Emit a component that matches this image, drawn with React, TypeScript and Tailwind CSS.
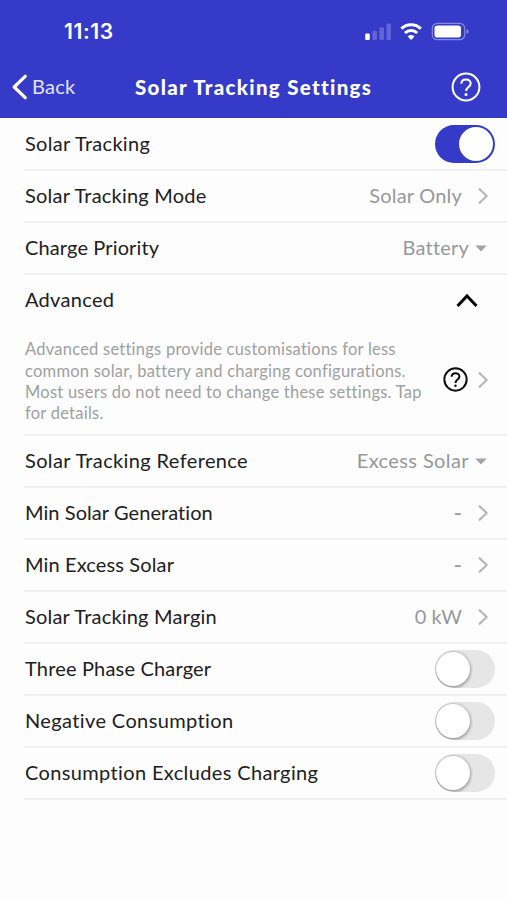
import React from "react";

function Help({ size, stroke, className }: { size: number; stroke: number; className?: string }) {
  return (
    <svg width={size} height={size} viewBox="0 0 30 30" fill="none" stroke="currentColor" strokeWidth={stroke} className={className}>
      <circle cx="15" cy="15" r="13.4" />
      <path d="M10.3 11.8c.1-2.7 2.1-4.4 4.7-4.4s4.7 1.7 4.7 4.1c0 3.6-4.6 3.6-4.6 7.6" />
      <circle cx="15" cy="22.4" r="1.5" fill="currentColor" stroke="none" />
    </svg>
  );
}

function Chevron() {
  return (
    <svg width="10" height="16" viewBox="0 0 10 16" fill="none" stroke="#b4b5b7" strokeWidth="2.1" strokeLinecap="round" strokeLinejoin="round" className="mr-[19px] ml-4 shrink-0">
      <path d="M1.6 1.2 8.7 8 1.6 14.8" />
    </svg>
  );
}

function Caret() {
  return (
    <svg width="12" height="7" viewBox="0 0 12 7" className="mr-5 ml-1.5 shrink-0">
      <path d="M.3.5h11.4L6 6.5z" fill="#a2a4a7" />
    </svg>
  );
}

function Toggle({ on = false }: { on?: boolean }) {
  return (
    <div className={`mr-3 flex h-[38px] w-[60px] items-center overflow-hidden rounded-full ${on ? "justify-end bg-[#363ac8] pr-[2px]" : "bg-[#e6e6e6] pl-px"}`}>
      <div className={`size-[34px] rounded-full bg-white ${on ? "" : "shadow-[0_1px_3px_1px_rgba(0,0,0,0.32)]"}`} />
    </div>
  );
}

function Row({ label, className, children }: { label: string; className: string; children: React.ReactNode }) {
  return (
    <div className="ml-6 flex h-13 items-center border-b-2 border-[#f0f0f1] pl-px text-xl">
      <span className={`pb-0.5 whitespace-nowrap text-[#202022] ${className}`}>{label}</span>
      <div className="ml-auto flex items-center whitespace-nowrap text-[#96989c]">{children}</div>
    </div>
  );
}

export default function App() {
  return (
    <div className="h-[900px] w-[507px] overflow-hidden bg-[#fdfdfd] font-['Lato',sans-serif]">
      <header className="h-[118px] bg-[#363ac8] text-white">
        <div className="flex h-[62px] items-center pl-16">
          <span className="pt-px font-['Inter',sans-serif] text-[21px] font-semibold tracking-[0.6px]">11:13</span>
          <svg width="106" height="20" viewBox="0 0 106 20" className="ml-auto mr-[37px]" fill="#fff">
            <rect x="1.2" y="12.5" width="4.6" height="6.5" rx="1.2" />
            <g opacity=".22">
              <rect x="8.5" y="9.7" width="4.4" height="9.3" rx="1.2" />
              <rect x="15.5" y="6.2" width="4.4" height="12.8" rx="1.2" />
              <rect x="22.5" y="2.5" width="4.4" height="16.5" rx="1.2" />
            </g>
            <g fill="none" stroke="#fff" strokeWidth="3">
              <path d="M37.4 7.6a14 14 0 0 1 19.4 0" />
              <path d="M41 12a8.8 8.8 0 0 1 12.2 0" />
            </g>
            <path d="M43.7 15.4a4.9 4.9 0 0 1 6.8 0L47.1 19z" />
            <rect x="68.3" y="2.3" width="32.4" height="16.4" rx="5" fill="none" stroke="#fff" strokeOpacity=".4" strokeWidth="1.2" />
            <rect x="70.5" y="4.5" width="26.5" height="12" rx="2.8" />
            <path d="M102.5 8v5c2.6-.8 2.6-4.2 0-5z" opacity=".45" />
          </svg>
        </div>
        <div className="flex h-[50px] items-center pl-3">
          <svg width="16" height="26" viewBox="0 0 16 26" fill="none" stroke="#fff" strokeWidth="3.2" strokeLinecap="round" strokeLinejoin="round">
            <path d="M13.2 2.3 2.2 13l11 10.7" />
          </svg>
          <span className="ml-1 w-[103px] pb-0.5 text-xl tracking-[0.25px] text-[#e2e3ff]">Back</span>
          <h1 className="text-[20.5px] font-black tracking-[1.3px] whitespace-nowrap">Solar Tracking Settings</h1>
          <Help size={30} stroke={2} className="mr-[26px] ml-auto" />
        </div>
      </header>
      <main className="pt-px">
        <Row label="Solar Tracking" className="tracking-[0.3px]"><Toggle on /></Row>
        <Row label="Solar Tracking Mode" className="tracking-[0.22px]"><span className="pb-0.5 tracking-[0.2px]">Solar Only</span><Chevron /></Row>
        <Row label="Charge Priority" className="tracking-[0.13px]"><span className="pb-0.5 tracking-[0.2px]">Battery</span><Caret /></Row>
        <div className="ml-6 flex h-[161px] flex-col border-b-2 border-[#f0f0f1] pl-px">
          <div className="flex h-[50px] shrink-0 items-center justify-between text-xl text-[#202022]">
            <span className="pb-0.5 tracking-[0.3px]">Advanced</span>
            <svg width="24" height="15" viewBox="0 0 24 15" fill="none" stroke="#050505" strokeWidth="3" className="mr-7">
              <path d="M2.5 13 12 3l9.5 10" />
            </svg>
          </div>
          <div className="flex h-[109px] items-center">
            <p className="w-[418px] pt-[5px] text-[16.5px] leading-[21.3px] tracking-[0.24px] whitespace-nowrap text-[#a0a0a1]">
              <span className="block">Advanced settings provide customisations for less</span>
              <span className="block">common solar, battery and charging configurations.</span>
              <span className="block">Most users do not need to change these settings. Tap</span>
              <span className="block">for details.</span>
            </p>
            <Help size={25} stroke={2.4} className="shrink-0 text-[#0c0c0c]" />
            <div className="-ml-1.5"><Chevron /></div>
          </div>
        </div>
        <Row label="Solar Tracking Reference" className="tracking-[0.37px]"><span className="pb-0.5 tracking-[0.4px]">Excess Solar</span><Caret /></Row>
        <Row label="Min Solar Generation" className="tracking-[0.07px]"><span className="pb-0.5 text-[23px] leading-7">-</span><Chevron /></Row>
        <Row label="Min Excess Solar" className="tracking-[0.13px]"><span className="pb-0.5 text-[23px] leading-7">-</span><Chevron /></Row>
        <Row label="Solar Tracking Margin" className="tracking-[0.2px]"><span className="pb-0.5">0 kW</span><Chevron /></Row>
        <Row label="Three Phase Charger" className="tracking-[0.18px]"><Toggle /></Row>
        <Row label="Negative Consumption" className="tracking-[0.38px]"><Toggle /></Row>
        <Row label="Consumption Excludes Charging" className="tracking-[0.36px]"><Toggle /></Row>
      </main>
    </div>
  );
}
